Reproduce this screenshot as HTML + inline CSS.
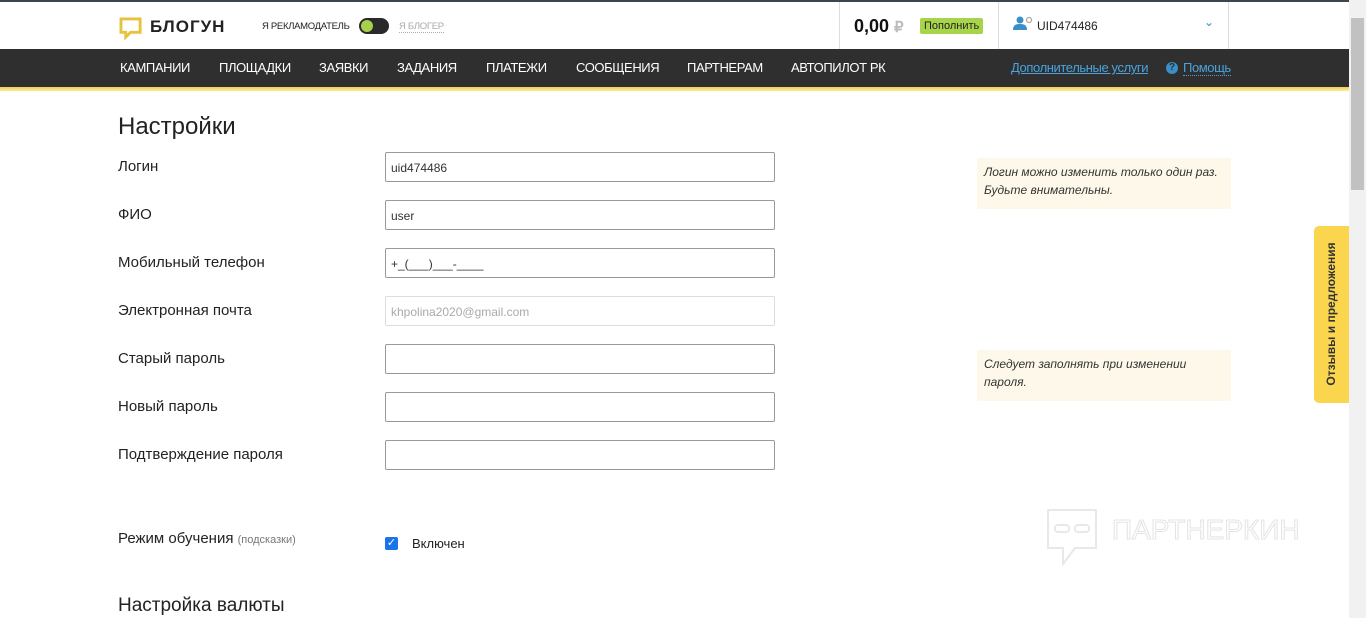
<!DOCTYPE html>
<html><head><meta charset="utf-8"><style>
*{box-sizing:border-box;margin:0;padding:0}
body{width:1366px;height:618px;overflow:hidden;background:#fff;font-family:"Liberation Sans",Arial,sans-serif;color:#222;position:relative}
.topline{position:absolute;left:0;top:0;width:1349px;height:2px;background:#3a4650}
.hdr{position:absolute;left:0;top:2px;width:1349px;height:47px;background:#fff}
.nav{position:absolute;left:0;top:49px;width:1349px;height:38px;background:#2f2f2f}
.yl{position:absolute;left:0;top:87px;width:1349px;height:4px;background:linear-gradient(#f3cf4a,#fbeaa8)}
.nav a{position:absolute;top:11px;color:#fff;font-size:13px;letter-spacing:-0.4px;text-decoration:none}
.vs{position:absolute;top:2px;width:1px;height:47px;background:#ddd}
.lbl{position:absolute;left:118px;font-size:15px;color:#222}
.inp{position:absolute;left:385px;width:390px;height:30px;border:1px solid #999;border-radius:2px;font-size:12px;padding:8px 5px;color:#333}
.tip{position:absolute;left:977px;width:254px;background:#fdf8ea;font-style:italic;font-size:12px;color:#333;padding:5px 7px;line-height:18px}
.sb{position:absolute;left:1349px;top:0;width:17px;height:618px;background:#f1f1f1}
</style></head><body>
<div class="topline"></div>
<div class="hdr">
 <svg style="position:absolute;left:119px;top:15px" width="25" height="23" viewBox="0 0 26 24"><path d="M2 2h20v14H12l-5 5v-5H2z" fill="none" stroke="#e8c23a" stroke-width="3"/></svg>
 <div style="position:absolute;left:150px;top:15px;font-size:17px;font-weight:bold;letter-spacing:1px;color:#222">БЛОГУН</div>
 <div style="position:absolute;left:262px;top:19px;font-size:9.5px;letter-spacing:-0.3px;color:#222">Я РЕКЛАМОДАТЕЛЬ</div>
 <div style="position:absolute;left:359px;top:16px;width:30px;height:16px;border-radius:8px;background:#2a2a2a"><div style="position:absolute;left:2px;top:2px;width:12px;height:12px;border-radius:6px;background:#a8d04a"></div></div>
 <div style="position:absolute;left:399px;top:19px;font-size:9.5px;letter-spacing:-0.3px;color:#aaa;border-bottom:1px dotted #aaa">Я БЛОГЕР</div>
 <div class="vs" style="left:839px;top:0"></div>
 <div style="position:absolute;left:854px;top:14px;font-size:18px;font-weight:bold;color:#111">0,00 <span style="color:#bbb;font-size:15px">₽</span></div>
 <div style="position:absolute;left:920px;top:16px;background:#a8d44a;font-size:11px;padding:2px 4px;border-radius:2px;color:#222">Пополнить</div>
 <div class="vs" style="left:998px;top:0"></div>
 <svg style="position:absolute;left:1013px;top:14px" width="20" height="14" viewBox="0 0 20 14"><circle cx="7" cy="4" r="3.5" fill="#3a8fc7"/><path d="M0 14c0-5 3-6 7-6s7 1 7 6z" fill="#3a8fc7"/><circle cx="16" cy="4" r="2.5" fill="none" stroke="#aaa" stroke-width="1.3"/></svg>
 <div style="position:absolute;left:1037px;top:17px;font-size:12px;color:#222">UID474486</div>
 <div style="position:absolute;left:1204px;top:13px;font-size:12px;color:#3a8fc7">⌄</div>
 <div class="vs" style="left:1228px;top:0"></div>
</div>
<div class="nav">
 <a style="left:120px">КАМПАНИИ</a><a style="left:219px">ПЛОЩАДКИ</a><a style="left:319px">ЗАЯВКИ</a><a style="left:397px">ЗАДАНИЯ</a><a style="left:486px">ПЛАТЕЖИ</a><a style="left:576px">СООБЩЕНИЯ</a><a style="left:687px">ПАРТНЕРАМ</a><a style="left:791px">АВТОПИЛОТ РК</a>
 <a style="left:1011px;color:#4aa3dc;text-decoration:underline">Дополнительные услуги</a>
 <div style="position:absolute;left:1166px;top:13px;width:12px;height:12px;border-radius:6px;background:#3a8fc7;color:#2f2f2f;font-size:10px;font-weight:bold;text-align:center;line-height:12px">?</div>
 <a style="left:1183px;color:#4aa3dc;border-bottom:1px dotted #4aa3dc">Помощь</a>
</div>
<div class="yl"></div>
<div style="position:absolute;left:118px;top:113px;font-size:24px;color:#222">Настройки</div>
<div class="lbl" style="top:158px">Логин</div><div class="inp" style="top:152px">uid474486</div>
<div class="lbl" style="top:206px">ФИО</div><div class="inp" style="top:200px">user</div>
<div class="lbl" style="top:254px">Мобильный телефон</div><div class="inp" style="top:248px">+_(___)___-____</div>
<div class="lbl" style="top:302px">Электронная почта</div><div class="inp" style="top:296px;border-color:#ddd;color:#aaa">khpolina2020@gmail.com</div>
<div class="lbl" style="top:350px">Старый пароль</div><div class="inp" style="top:344px"></div>
<div class="lbl" style="top:398px">Новый пароль</div><div class="inp" style="top:392px"></div>
<div class="lbl" style="top:446px">Подтверждение пароля</div><div class="inp" style="top:440px"></div>
<div class="tip" style="top:158px;height:51px">Логин можно изменить только один раз. Будьте внимательны.</div>
<div class="tip" style="top:350px;height:51px">Следует заполнять при изменении пароля.</div>
<div class="lbl" style="top:530px">Режим обучения <span style="font-size:11px;color:#777">(подсказки)</span></div>
<div style="position:absolute;left:385px;top:537px;width:13px;height:13px;border-radius:2px;background:#1a73e8;color:#fff;font-size:11px;line-height:13px;text-align:center">✓</div>
<div style="position:absolute;left:412px;top:536px;font-size:13px">Включен</div>
<div style="position:absolute;left:118px;top:595px;font-size:19px">Настройка валюты</div>
<svg style="position:absolute;left:1045px;top:508px" width="55" height="58" viewBox="0 0 55 58"><path d="M3 2h48v38H30l-12 16V40H3z" fill="none" stroke="#e8e8e8" stroke-width="2"/><rect x="10" y="17" width="14" height="7" rx="3" fill="none" stroke="#e8e8e8" stroke-width="2"/><rect x="30" y="17" width="14" height="7" rx="3" fill="none" stroke="#e8e8e8" stroke-width="2"/></svg>
<div style="position:absolute;left:1112px;top:514px;font-size:28px;color:#fff;-webkit-text-stroke:1px #e4e4e4;letter-spacing:0px">ПАРТНЕРКИН</div>
<div style="position:absolute;left:1314px;top:226px;width:35px;height:177px;background:#fbd54d;border-radius:5px 0 0 5px"></div>
<div style="position:absolute;left:1331px;top:314px;transform:translate(-50%,-50%) rotate(-90deg);white-space:nowrap;font-size:12px;font-weight:bold;color:#333">Отзывы и предложения</div>
<div class="sb"><div style="position:absolute;left:2px;top:18px;width:13px;height:172px;background:#c1c1c1"></div></div>
</body></html>
